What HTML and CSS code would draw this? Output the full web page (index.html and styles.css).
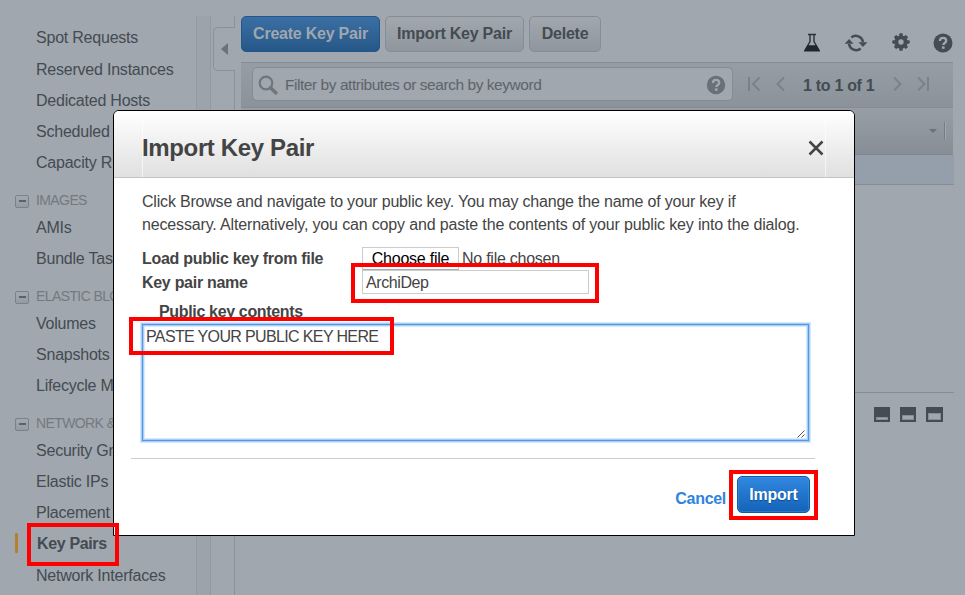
FILE: index.html
```html
<!DOCTYPE html>
<html lang="en">
<head>
<meta charset="utf-8">
<title>Import Key Pair</title>
<link rel="stylesheet" href="styles.css">
</head>
<body>
<div class="console">
  <nav class="sidebar">
    <a class="item first">Spot Requests</a>
    <a class="item">Reserved Instances</a>
    <a class="item">Dedicated Hosts</a>
    <a class="item">Scheduled</a>
    <a class="item">Capacity R</a>
    <h4 class="group"><i class="toggle"></i>IMAGES</h4>
    <a class="item">AMIs</a>
    <a class="item">Bundle Tas</a>
    <h4 class="group"><i class="toggle"></i>ELASTIC BLO</h4>
    <a class="item">Volumes</a>
    <a class="item">Snapshots</a>
    <a class="item">Lifecycle M</a>
    <h4 class="group"><i class="toggle"></i>NETWORK &amp;</h4>
    <a class="item">Security Gr</a>
    <a class="item">Elastic IPs</a>
    <a class="item">Placement</a>
    <a class="item active">Key Pairs</a>
    <a class="item last">Network Interfaces</a>
  </nav>
  <div class="gutter"></div>
  <div class="collapse">
    <div class="rail top"></div>
    <div class="tab"><svg width="7" height="12" viewBox="0 0 7 12"><path d="M7 0v12L0 6z" fill="#6b7279"/></svg></div>
    <div class="rail rest"></div>
  </div>
  <main class="main">
    <div class="actions">
      <button class="btn primary create">Create Key Pair</button>
      <button class="btn import-kp">Import Key Pair</button>
      <button class="btn delete">Delete</button>
      <div class="tools">
        <svg width="18" height="20" viewBox="0 0 18 20"><path d="M5 1.500h8M7 2v6.500L2 17.300h14L11 8.500V2" fill="none" stroke="#2a323a" stroke-width="1.400"/><path d="M4.600 12.200h8.800l3.700 6.300H.9z" fill="#1f272f"/></svg>
        <svg width="24" height="20" viewBox="0 0 24 20"><path d="M7.300 4.400A7.300 7.300 0 0 1 19 9M16.700 15.600A7.300 7.300 0 0 1 5 11" fill="none" stroke="#454c53" stroke-width="2.500"/><path d="M14.500 9.200h8.900L18.900 14zM.6 10.800h8.900L5.100 6z" fill="#454c53"/></svg>
        <svg width="18" height="18" viewBox="0 0 18 18"><g fill="#454c53"><circle cx="9" cy="9" r="6.600"/><rect x="7.200" y=".3" width="3.600" height="17.400" rx="1"/><rect x=".3" y="7.200" width="17.400" height="3.600" rx="1"/><g transform="rotate(45 9 9)"><rect x="7.200" y=".5" width="3.600" height="17" rx="1"/><rect x=".5" y="7.200" width="17" height="3.600" rx="1"/></g></g><circle cx="9" cy="9" r="2.700" fill="#a0a7ae"/></svg>
        <svg width="20" height="20" viewBox="0 0 20 20"><circle cx="10" cy="10" r="9.500" fill="#454c53"/><path d="M6.900 8c0-2 1.400-3.100 3.200-3.100S13.200 6 13.200 7.700c0 2.300-2.900 2.200-2.900 4.400" fill="none" stroke="#a0a7ae" stroke-width="2.300"/><rect x="8.900" y="13.400" width="2.700" height="2.400" fill="#a0a7ae"/></svg>
      </div>
    </div>
    <div class="filterbar">
      <div class="search">
        <svg width="20" height="20" viewBox="0 0 20 20"><circle cx="8" cy="8" r="6.300" fill="none" stroke="#6f767d" stroke-width="2.200"/><path d="M12.500 12.700l5.300 5.100" stroke="#6f767d" stroke-width="3.600" stroke-linecap="round"/></svg>
        <span class="placeholder">Filter by attributes or search by keyword</span>
        <svg width="20" height="20" viewBox="0 0 20 20"><circle cx="10" cy="10" r="9.200" fill="#697077"/><path d="M6.900 8c0-2 1.400-3.100 3.200-3.100S13.200 6 13.200 7.700c0 2.300-2.900 2.200-2.900 4.400" fill="none" stroke="#a0a7ae" stroke-width="2.300"/><rect x="8.900" y="13.400" width="2.700" height="2.400" fill="#a0a7ae"/></svg>
      </div>
      <div class="pager">
        <svg width="40" height="16" viewBox="0 0 40 16"><path d="M2 1v14M12.500 1.500L6 8l6.500 6.500M37 1.500L30.500 8l6.500 6.500" fill="none" stroke="#7a8188" stroke-width="1.900"/></svg>
        <b>1 to 1 of 1</b>
        <svg width="40" height="16" viewBox="0 0 40 16"><path d="M4 1.500L10.500 8 4 14.500M28 1.500L34.500 8 28 14.500M38 1v14" fill="none" stroke="#7a8188" stroke-width="1.900"/></svg>
      </div>
    </div>
    <div class="thead"><i class="caret"></i><i class="sep"></i></div>
    <div class="row"></div>
    <div class="detail">
      <i class="pane small"></i><i class="pane medium"></i><i class="pane large"></i>
    </div>
  </main>
</div>

<section class="dialog">
  <header class="dialog-head">
    <div class="dialog-title">
      <h1>Import Key Pair</h1>
      <svg width="16" height="16" viewBox="0 0 16 16"><path d="M1.500 1.500l13 13M14.500 1.500l-13 13" stroke="#444" stroke-width="2.500"/></svg>
    </div>
  </header>
  <div class="dialog-body">
    <p class="intro"><span class="lead">Click Browse and navigate to your public key. You may change the name of your key if</span><br>necessary. Alternatively, you can copy and paste the contents of your public key into the dialog.</p>
    <div class="field file"><label>Load public key from file</label><span class="choose">Choose file</span><span class="nofile">No file chosen</span></div>
    <div class="field"><label class="name">Key pair name</label><span class="input">ArchiDep</span></div>
    <label class="contents">Public key contents</label>
    <div class="textarea"><span>PASTE YOUR PUBLIC KEY HERE</span>
      <svg class="grip" width="8" height="8" viewBox="0 0 8 8"><path d="M.5 7.500l7-7M4.500 7.500l3-3" stroke="#555" stroke-width="1"/></svg>
    </div>
    <footer class="dialog-foot"><a class="cancel">Cancel</a><button class="btn primary import">Import</button></footer>
  </div>
</section>

<div class="mark mark-nav"></div>
<div class="mark mark-name"></div>
<div class="mark mark-contents"></div>
<div class="mark mark-import"></div>
</body>
</html>
```
FILE: styles.css
```css
* { box-sizing: border-box; }
body {
  margin: 0; width: 965px; height: 595px; overflow: hidden; position: relative;
  background: #a0a7ae; color: #444b52;
  font-family: "Liberation Sans", Arial, sans-serif; font-size: 16px; letter-spacing: -.22px;
}
svg { display: block; flex: none; }
.console { display: flex; height: 595px; }

.sidebar { width: 196px; padding-top: 22px; flex: none; }
.item { display: block; height: 31px; line-height: 31px; padding-left: 36px; white-space: nowrap; }
.item.first { height: 32px; }
.item.active { font-weight: bold; padding-left: 22px; margin-left: 15px; position: relative; letter-spacing: -.35px; }
.item.active::before { content: ""; position: absolute; left: 0; top: 5px; width: 3px; height: 20px; background: #b3802f; border-radius: 1px; }
.item.last { padding-top: 1px; }
.group { display: flex; align-items: center; margin: 0; height: 34px; padding: 10px 0 0 15px; font-weight: normal; font-size: 14px; letter-spacing: -.6px; color: #737a81; white-space: nowrap; }
.toggle { width: 14px; height: 13px; border: 1px solid #7a8188; border-radius: 2px; margin: 2px 7px 0 0; display: flex; align-items: center; justify-content: center; background: linear-gradient(#a2a9b0, #949ba2); }
.toggle::before { content: ""; width: 7px; height: 2px; background: #5b6269; }

.gutter { width: 15px; margin-top: 16px; flex: none; border: solid #9299a0; border-width: 0 1px; background: #9ca3aa; }
.collapse { width: 24px; padding-top: 16px; flex: none; display: flex; flex-direction: column; }
.rail { border-right: 1px solid #8a9198; }
.rail.top { height: 11px; }
.rail.rest { flex: 1; }
.tab { height: 44px; margin-left: 2px; border: 1px solid #8a9198; border-right: 0; border-radius: 5px 0 0 5px; display: flex; align-items: center; padding-left: 7px; }

.main { flex: 1; padding: 16px 0 0 6px; }
.actions { display: flex; gap: 5px; height: 46px; }
.btn { height: 36px; padding: 0; border: 1px solid #868d94; border-radius: 5px; background: linear-gradient(#a0a7ae, #8f969d); color: #444b52; font: bold 16px "Liberation Sans", Arial, sans-serif; letter-spacing: -.23px; text-align: center; }
.btn.primary { background: linear-gradient(#3b6fa3, #265788); border-color: #21578f; color: #a0a7ae; }
.create, .import-kp { width: 139px; }
.delete { width: 72px; }
.tools { display: flex; align-items: center; height: 20px; margin: 17px 0 0 197px; }
.tools svg:nth-child(2) { margin-left: 23px; }
.tools svg:nth-child(3) { margin: -2px 0 0 24px; }
.tools svg:nth-child(4) { margin: -1px 0 0 23px; }

.filterbar { width: 712px; height: 46px; display: flex; border: solid #858c93; border-width: 1px 0; padding: 4px 0 0 11px; background: linear-gradient(#969da4, #8b9299); }
.search { width: 481px; height: 34px; border: 1px solid #858c93; border-radius: 5px; background: #a0a7ae; display: flex; align-items: center; padding: 1px 6px 0 5px; }
.placeholder { flex: 1; margin-left: 7px; font-size: 15.5px; letter-spacing: -.45px; color: #5d646b; white-space: nowrap; }
.pager { display: flex; align-items: center; height: 34px; margin-left: 14px; }
.pager b { width: 72px; margin: 3px 10px 0 16px; font-size: 16px; letter-spacing: -.3px; white-space: nowrap; }
.pager svg:last-child { margin-left: 5px; }
.thead { width: 712px; height: 47px; display: flex; justify-content: flex-end; align-items: center; padding-right: 5px; background: linear-gradient(#979ea5, #878e95); border-bottom: 1px solid #80878e; }
.caret { border: 4px solid transparent; border-top: 4px solid #6b7279; border-bottom: 0; margin-right: 7px; }
.sep { width: 2px; height: 18px; margin-right: 2px; border-left: 1px solid #767d84; border-right: 1px solid #a0a7ae; }
.row { width: 713px; height: 30px; background: #959fac; border-bottom: 1px solid #858c93; }
.detail { width: 713px; height: 40px; margin-top: 207px; border-top: 1px solid #858c93; display: flex; justify-content: flex-end; gap: 10px; padding: 14px 11px 0 0; }
.pane { width: 16px; height: 15px; border: 2px solid #454c53; background: #a0a7ae; box-shadow: inset 0 0 0 1px #858c93; }
.pane.small { border-top-width: 10px; }
.pane.medium { border-top-width: 8px; }
.pane.large { width: 17px; border-top-width: 6px; }

.dialog { position: absolute; left: 113px; top: 110px; width: 742px; height: 426px; background: #fff; border: 1px solid #000; border-radius: 6px 6px 0 0; overflow: hidden; color: #444; }
.dialog-head { height: 67px; padding: 0 28px; background: linear-gradient(#fff, #e0e0e0); border-bottom: 1px solid #c4c4c4; }
.dialog-title { height: 66px; display: flex; align-items: center; justify-content: space-between; padding-right: 1px; border: solid rgba(255,255,255,.6); border-width: 0 1px; }
.dialog-title svg { margin: 8px 0 0; }
h1 { margin: 8px 0 0 -1px; font-size: 24px; letter-spacing: -.36px; line-height: 28px; }
.dialog-body { padding: 12px 17px 0 28px; }
.intro { margin: 0; height: 57px; line-height: 23px; font-size: 16px; letter-spacing: -.157px; white-space: nowrap; }
.lead { letter-spacing: -.195px; }
.field { display: flex; height: 24px; line-height: 24px; }
.field.file { height: 23px; line-height: 23px; }
.field label { width: 220px; font-weight: bold; letter-spacing: -.29px; }
.field .name { line-height: 26px; }
.choose { width: 97px; height: 23px; border: 1px solid #ccc; border-bottom-color: #aaa; color: #000; text-align: center; letter-spacing: -.24px; line-height: 22px; }
.nofile { margin-left: 3px; letter-spacing: -.25px; }
.input { width: 227px; height: 24px; border: 1px solid #ccc; padding-left: 3px; font-size: 16px; letter-spacing: -.4px; line-height: 23px; }
.contents { display: block; margin: 6px 0 0 17px; height: 24px; line-height: 23px; font-weight: bold; letter-spacing: -.34px; }
.textarea { width: 667px; height: 117px; border: 1px solid #5897df; box-shadow: 0 0 0 1px #a5cdf8, 0 0 0 2px #d5e9fe, inset 0 0 0 1px #a5cdf8, inset 0 0 1px 2px #d5e9fe; padding: 1px 3px; line-height: 22px; font-size: 16px; letter-spacing: -.64px; display: flex; justify-content: space-between; }
.grip { align-self: flex-end; margin-bottom: 1px; }
.dialog-foot { margin: 17px 22px 0 -11px; border-top: 1px solid #ccc; height: 60px; display: flex; justify-content: flex-end; padding: 17px 5px 0 0; }
.cancel { color: #2e84dc; font-weight: bold; line-height: 46px; letter-spacing: -.3px; margin-right: 11px; }
.btn.import { width: 73px; height: 37px; color: #fff; background: linear-gradient(#3187e0, #1463b8); border-color: #0f5ca9; box-shadow: inset 0 0 0 1px rgba(90,160,230,.35); text-shadow: 0 1px 1px #0b4a8a; }

.mark { position: absolute; border: 4px solid #f00; }
.mark-nav { left: 27px; top: 523px; width: 92px; height: 43px; }
.mark-name { left: 351px; top: 263px; width: 248px; height: 40px; }
.mark-contents { left: 129px; top: 317px; width: 265px; height: 38px; }
.mark-import { left: 729px; top: 470px; width: 89px; height: 50px; }
```
